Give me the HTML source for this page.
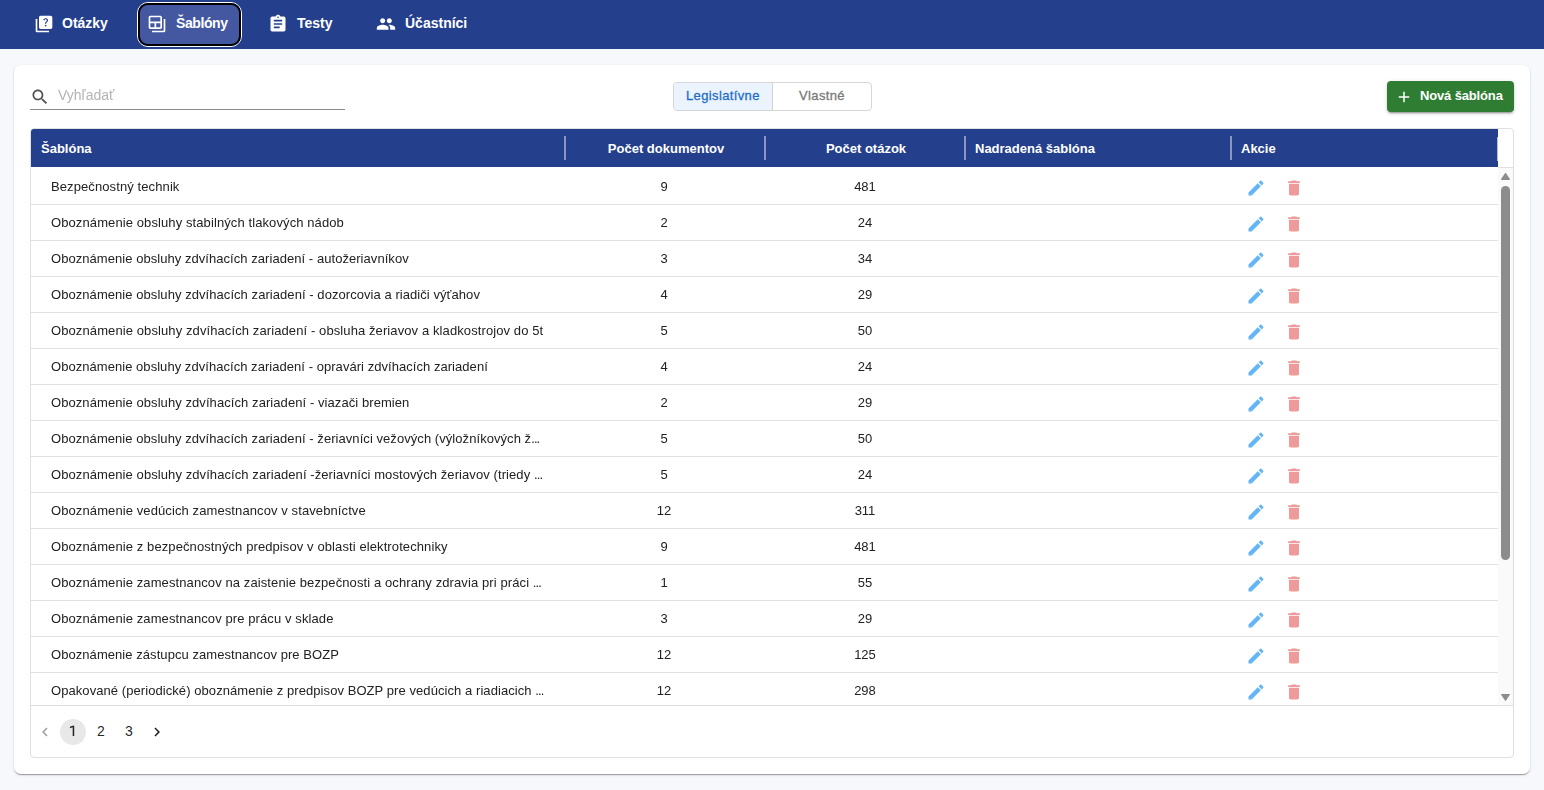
<!DOCTYPE html>
<html lang="sk">
<head>
<meta charset="utf-8">
<style>
*{box-sizing:border-box;margin:0;padding:0}
.row .n,.row .c2,.row .c3,.search-ph{will-change:transform}
html,body{width:1544px;height:790px;overflow:hidden}
body{background:#f7f8fc;font-family:"Liberation Sans",sans-serif;position:relative;color:rgba(0,0,0,0.87)}
.nav{position:absolute;left:0;top:0;width:1544px;height:49px;background:#243f8c}
.nav .ic{position:absolute;top:14px;width:20px;height:20px;fill:#fff}
.nav .tx{position:absolute;top:14px;font-size:14px;font-weight:700;color:#fff;line-height:18px;white-space:nowrap}
.activebtn{position:absolute;left:137px;top:2px;width:105px;height:45px;border-radius:11px;border:1px solid #fff;}
.activebtn .in{position:absolute;left:0;top:0;right:0;bottom:0;border:2px solid #000;border-radius:10px;background:#4358a0}
.card{position:absolute;left:14px;top:65px;width:1516px;height:709px;background:#fff;border-radius:7px;box-shadow:0px 2px 1px -1px rgba(0,0,0,0.2),0px 1px 1px 0px rgba(0,0,0,0.14),0px 1px 3px 0px rgba(0,0,0,0.12)}
.search-ic{position:absolute;left:30px;top:87px;width:20px;height:20px;fill:#505050}
.search-ph{position:absolute;left:58px;top:87px;font-size:14px;line-height:16px;color:#b4b4b4}
.search-line{position:absolute;left:30px;top:109px;width:315px;height:1px;background:#8a8a8a}
.tg{position:absolute;left:673px;top:82px;width:199px;height:29px;border:1px solid #d6d6d6;border-radius:4px;overflow:hidden}
.tg .a{position:absolute;left:0;top:0;width:99px;height:27px;background:#ebf3fc;border-right:1px solid #cfd4da}
.tg .t1{position:absolute;left:12px;top:5px;font-size:13px;letter-spacing:0.37px;color:#1f6fc5;line-height:15px;-webkit-text-stroke:0.3px #1f6fc5}
.tg .t2{position:absolute;left:125px;top:5px;font-size:13px;letter-spacing:0.37px;color:#7a7a7a;line-height:15px;-webkit-text-stroke:0.3px #7a7a7a}
.newbtn{position:absolute;left:1387px;top:81px;width:127px;height:31px;background:#2e7d32;border-radius:4px;box-shadow:0px 3px 1px -2px rgba(0,0,0,0.2),0px 2px 2px 0px rgba(0,0,0,0.14),0px 1px 5px 0px rgba(0,0,0,0.12)}
.newbtn svg{position:absolute;left:8px;top:7px;width:18px;height:18px;fill:#fff}
.newbtn span{position:absolute;left:33px;top:7px;letter-spacing:-0.15px;font-size:13px;font-weight:700;color:#fff;line-height:15px;white-space:nowrap}
.tbl{position:absolute;left:30px;top:128px;width:1484px;height:630px;border:1px solid #e0e0e0;border-radius:4px;overflow:hidden}
.thead{position:absolute;left:0;top:0;width:1467px;height:38px;background:#243f8c}
.th{position:absolute;top:12px;font-size:13px;font-weight:700;color:#fff;line-height:15px;white-space:nowrap}
.sep{position:absolute;top:7px;width:2px;height:24px;background:#8b95c1}
.rows{position:absolute;left:0;top:39px;width:1467px;height:537px;overflow:hidden}
.bodyline{position:absolute;left:0;top:576px;width:1483px;height:1px;background:#e0e0e0}
.spacer-line{position:absolute;left:1467px;top:38px;width:16px;height:1px;background:#e0e0e0}
.row{position:absolute;left:0;width:1467px;height:37px;border-bottom:1px solid #e0e0e0}
.row .n{position:absolute;left:20px;top:11px;font-size:13px;line-height:15px;white-space:nowrap;color:#222;letter-spacing:0.1px}
.ell{letter-spacing:-0.9px}
.row .c2,.row .c3{position:absolute;top:11px;font-size:13px;line-height:15px;width:200px;text-align:center;color:#222}
.row .c2{left:533px}
.row .c3{left:734px}
.row .ed{position:absolute;left:1215px;top:9.5px;width:20px;height:20px;fill:#64b5f6}
.row .dl{position:absolute;left:1253px;top:9.5px;width:20px;height:20px;fill:#ef9a9a}
.sb{position:absolute;left:1467px;top:39px;width:15px;height:537px;background:#fafafa}
.sb .up{position:absolute;left:3px;top:5px;width:0;height:0;border-left:4.5px solid transparent;border-right:4.5px solid transparent;border-bottom:7px solid #8c8c8c}
.sb .dn{position:absolute;left:3px;top:526px;width:0;height:0;border-left:4.5px solid transparent;border-right:4.5px solid transparent;border-top:7px solid #8c8c8c}
.sb .th{position:absolute;left:3px;top:18px;width:9px;height:374px;border-radius:4.5px;background:#8c8c8c}
.pgc{position:absolute;left:60px;top:719px;width:26px;height:26px;border-radius:13px;background:#e8e8e8}
.pgn{position:absolute;top:723px;width:28px;text-align:center;font-size:14px;line-height:16px;color:rgba(0,0,0,0.87)}
.pgi{position:absolute;top:723px;width:18px;height:18px}
</style>
</head>
<body>
<div class="nav">
  <svg class="ic" style="left:34px" viewBox="0 0 24 24"><path d="M4 6H2v14c0 1.1.9 2 2 2h14v-2H4zm16-4H8c-1.1 0-2 .9-2 2v12c0 1.1.9 2 2 2h12c1.1 0 2-.9 2-2V4c0-1.1-.9-2-2-2m-5.99 13c-.59 0-1.05-.47-1.05-1.05 0-.59.47-1.04 1.05-1.04.59 0 1.04.45 1.040 1.04-.01.58-.45 1.05-1.04 1.05m2.5-6.17c-.63.930-1.23 1.21-1.56 1.81-.13.24-.18.4-.18 1.18h-1.52c0-.41-.06-1.08.26-1.65.41-.73 1.18-1.16 1.63-1.8.48-.68.21-1.94-1.14-1.94-.88 0-1.32.67-1.5 1.23l-1.37-.57C11.51 5.96 12.52 5 13.99 5c1.23 0 2.08.56 2.51 1.26.37.61.58 1.73.01 2.57"/></svg>
  <div class="tx" style="left:62px">Otázky</div>
  <div class="activebtn"><div class="in"></div></div>
  <svg class="ic" style="left:147px" viewBox="0 0 24 24"><path d="M20 6v14H6v2h14c1.1 0 2-.9 2-2V6z"/><path d="M16 2H4c-1.1 0-2 .9-2 2v12c0 1.1.9 2 2 2h12c1.1 0 2-.9 2-2V4c0-1.1-.9-2-2-2M9 16H4v-5h5zm7 0h-5v-5h5zm0-7H4V4h12z"/></svg>
  <div class="tx" style="left:176px;letter-spacing:-0.4px">Šablóny</div>
  <svg class="ic" style="left:268px" viewBox="0 0 24 24"><path d="M19 3h-4.18C14.4 1.84 13.3 1 12 1s-2.4.84-2.82 2H5c-1.1 0-2 .9-2 2v14c0 1.1.9 2 2 2h14c1.1 0 2-.9 2-2V5c0-1.1-.9-2-2-2m-7 0c.55 0 1 .45 1 1s-.45 1-1 1-1-.45-1-1 .45-1 1-1m2 14H7v-2h7zm3-4H7v-2h10zm0-4H7V7h10z"/></svg>
  <div class="tx" style="left:297px">Testy</div>
  <svg class="ic" style="left:376px" viewBox="0 0 24 24"><path d="M16 11c1.66 0 2.99-1.34 2.99-3S17.66 5 16 5c-1.66 0-3 1.34-3 3s1.34 3 3 3m-8 0c1.66 0 2.99-1.34 2.99-3S9.66 5 8 5C6.34 5 5 6.34 5 8s1.340 3 3 3m0 2c-2.33 0-7 1.17-7 3.5V19h14v-2.5c0-2.33-4.67-3.5-7-3.5m8 0c-.29 0-.62.02-.97.05 1.16.84 1.97 1.97 1.97 3.45V19h6v-2.5c0-2.33-4.67-3.5-7-3.5"/></svg>
  <div class="tx" style="left:405px">Účastníci</div>
</div>

<div class="card"></div>
<svg class="search-ic" viewBox="0 0 24 24"><path d="M15.5 14h-.79l-.28-.27C15.41 12.59 16 11.11 16 9.5 16 5.910 13.09 3 9.5 3S3 5.91 3 9.5 5.91 16 9.5 16c1.61 0 3.09-.59 4.23-1.57l.27.28v.79l5 4.99L20.49 19zm-6 0C7.01 14 5 11.99 5 9.5S7.01 5 9.5 5 14 7.01 14 9.5 11.99 14 9.5 14"/></svg>
<div class="search-ph">Vyhľadať</div>
<div class="search-line"></div>

<div class="tg"><div class="a"></div><div class="t1">Legislatívne</div><div class="t2">Vlastné</div></div>

<div class="newbtn"><svg viewBox="0 0 24 24"><path d="M19 13h-6v6h-2v-6H5v-2h6V5h2v6h6z"/></svg><span>Nová šablóna</span></div>

<div class="tbl">
  <div class="thead">
    <div class="th" style="left:10px">Šablóna</div>
    <div class="sep" style="left:533px"></div>
    <div class="th" style="left:535px;width:200px;text-align:center">Počet dokumentov</div>
    <div class="sep" style="left:733px"></div>
    <div class="th" style="left:735px;width:200px;text-align:center">Počet otázok</div>
    <div class="sep" style="left:933px"></div>
    <div class="th" style="left:944px">Nadradená šablóna</div>
    <div class="sep" style="left:1199px"></div>
    <div class="th" style="left:1210px">Akcie</div>
    <div class="sep" style="left:1466px;width:1px;top:8px;height:24px;background:#b5bcd8"></div>
  </div>
  <div class="rows" id="rows">
<div class="row" style="top:0px"><div class="n">Bezpečnostný technik</div><div class="c2">9</div><div class="c3">481</div><svg class="ed" viewBox="0 0 24 24"><path d="M3 17.25V21h3.75L17.81 9.94l-3.75-3.75zM20.71 7.04c.39-.39.39-1.02 0-1.41l-2.34-2.34a.996.996 0 0 0-1.41 0l-1.83 1.83 3.75 3.75z"/></svg><svg class="dl" viewBox="0 0 24 24"><path d="M6 19c0 1.1.9 2 2 2h8c1.1 0 2-.9 2-2V7H6zM19 4h-3.5l-1-1h-5l-1 1H5v2h14z"/></svg></div>
<div class="row" style="top:36px"><div class="n">Oboznámenie obsluhy stabilných tlakových nádob</div><div class="c2">2</div><div class="c3">24</div><svg class="ed" viewBox="0 0 24 24"><path d="M3 17.25V21h3.75L17.81 9.94l-3.75-3.75zM20.71 7.04c.39-.39.39-1.02 0-1.41l-2.34-2.34a.996.996 0 0 0-1.41 0l-1.83 1.83 3.75 3.75z"/></svg><svg class="dl" viewBox="0 0 24 24"><path d="M6 19c0 1.1.9 2 2 2h8c1.1 0 2-.9 2-2V7H6zM19 4h-3.5l-1-1h-5l-1 1H5v2h14z"/></svg></div>
<div class="row" style="top:72px"><div class="n" style="letter-spacing:0.05px">Oboznámenie obsluhy zdvíhacích zariadení - autožeriavníkov</div><div class="c2">3</div><div class="c3">34</div><svg class="ed" viewBox="0 0 24 24"><path d="M3 17.25V21h3.75L17.81 9.94l-3.75-3.75zM20.71 7.04c.39-.39.39-1.02 0-1.41l-2.34-2.34a.996.996 0 0 0-1.41 0l-1.83 1.83 3.75 3.75z"/></svg><svg class="dl" viewBox="0 0 24 24"><path d="M6 19c0 1.1.9 2 2 2h8c1.1 0 2-.9 2-2V7H6zM19 4h-3.5l-1-1h-5l-1 1H5v2h14z"/></svg></div>
<div class="row" style="top:108px"><div class="n" style="letter-spacing:0.06px">Oboznámenie obsluhy zdvíhacích zariadení - dozorcovia a riadiči výťahov</div><div class="c2">4</div><div class="c3">29</div><svg class="ed" viewBox="0 0 24 24"><path d="M3 17.25V21h3.75L17.81 9.94l-3.75-3.75zM20.71 7.04c.39-.39.39-1.02 0-1.41l-2.34-2.34a.996.996 0 0 0-1.41 0l-1.83 1.83 3.75 3.75z"/></svg><svg class="dl" viewBox="0 0 24 24"><path d="M6 19c0 1.1.9 2 2 2h8c1.1 0 2-.9 2-2V7H6zM19 4h-3.5l-1-1h-5l-1 1H5v2h14z"/></svg></div>
<div class="row" style="top:144px"><div class="n">Oboznámenie obsluhy zdvíhacích zariadení - obsluha žeriavov a kladkostrojov do 5t</div><div class="c2">5</div><div class="c3">50</div><svg class="ed" viewBox="0 0 24 24"><path d="M3 17.25V21h3.75L17.81 9.94l-3.75-3.75zM20.71 7.04c.39-.39.39-1.02 0-1.41l-2.34-2.34a.996.996 0 0 0-1.41 0l-1.83 1.83 3.75 3.75z"/></svg><svg class="dl" viewBox="0 0 24 24"><path d="M6 19c0 1.1.9 2 2 2h8c1.1 0 2-.9 2-2V7H6zM19 4h-3.5l-1-1h-5l-1 1H5v2h14z"/></svg></div>
<div class="row" style="top:180px"><div class="n" style="letter-spacing:0.045px">Oboznámenie obsluhy zdvíhacích zariadení - opravári zdvíhacích zariadení</div><div class="c2">4</div><div class="c3">24</div><svg class="ed" viewBox="0 0 24 24"><path d="M3 17.25V21h3.75L17.81 9.94l-3.75-3.75zM20.71 7.04c.39-.39.39-1.02 0-1.41l-2.34-2.34a.996.996 0 0 0-1.41 0l-1.83 1.83 3.75 3.75z"/></svg><svg class="dl" viewBox="0 0 24 24"><path d="M6 19c0 1.1.9 2 2 2h8c1.1 0 2-.9 2-2V7H6zM19 4h-3.5l-1-1h-5l-1 1H5v2h14z"/></svg></div>
<div class="row" style="top:216px"><div class="n" style="letter-spacing:0.075px">Oboznámenie obsluhy zdvíhacích zariadení - viazači bremien</div><div class="c2">2</div><div class="c3">29</div><svg class="ed" viewBox="0 0 24 24"><path d="M3 17.25V21h3.75L17.81 9.94l-3.75-3.75zM20.71 7.04c.39-.39.39-1.02 0-1.41l-2.34-2.34a.996.996 0 0 0-1.41 0l-1.83 1.83 3.75 3.75z"/></svg><svg class="dl" viewBox="0 0 24 24"><path d="M6 19c0 1.1.9 2 2 2h8c1.1 0 2-.9 2-2V7H6zM19 4h-3.5l-1-1h-5l-1 1H5v2h14z"/></svg></div>
<div class="row" style="top:252px"><div class="n" style="letter-spacing:0.06px">Oboznámenie obsluhy zdvíhacích zariadení - žeriavníci vežových (výložníkových ž<span class="ell">...</span></div><div class="c2">5</div><div class="c3">50</div><svg class="ed" viewBox="0 0 24 24"><path d="M3 17.25V21h3.75L17.81 9.94l-3.75-3.75zM20.71 7.04c.39-.39.39-1.02 0-1.41l-2.34-2.34a.996.996 0 0 0-1.41 0l-1.83 1.83 3.75 3.75z"/></svg><svg class="dl" viewBox="0 0 24 24"><path d="M6 19c0 1.1.9 2 2 2h8c1.1 0 2-.9 2-2V7H6zM19 4h-3.5l-1-1h-5l-1 1H5v2h14z"/></svg></div>
<div class="row" style="top:288px"><div class="n" style="letter-spacing:0.085px">Oboznámenie obsluhy zdvíhacích zariadení -žeriavníci mostových žeriavov (triedy <span class="ell">...</span></div><div class="c2">5</div><div class="c3">24</div><svg class="ed" viewBox="0 0 24 24"><path d="M3 17.25V21h3.75L17.81 9.94l-3.75-3.75zM20.71 7.04c.39-.39.39-1.02 0-1.41l-2.34-2.34a.996.996 0 0 0-1.41 0l-1.83 1.83 3.75 3.75z"/></svg><svg class="dl" viewBox="0 0 24 24"><path d="M6 19c0 1.1.9 2 2 2h8c1.1 0 2-.9 2-2V7H6zM19 4h-3.5l-1-1h-5l-1 1H5v2h14z"/></svg></div>
<div class="row" style="top:324px"><div class="n">Oboznámenie vedúcich zamestnancov v stavebníctve</div><div class="c2">12</div><div class="c3">311</div><svg class="ed" viewBox="0 0 24 24"><path d="M3 17.25V21h3.75L17.81 9.94l-3.75-3.75zM20.71 7.04c.39-.39.39-1.02 0-1.41l-2.34-2.34a.996.996 0 0 0-1.41 0l-1.83 1.83 3.75 3.75z"/></svg><svg class="dl" viewBox="0 0 24 24"><path d="M6 19c0 1.1.9 2 2 2h8c1.1 0 2-.9 2-2V7H6zM19 4h-3.5l-1-1h-5l-1 1H5v2h14z"/></svg></div>
<div class="row" style="top:360px"><div class="n">Oboznámenie z bezpečnostných predpisov v oblasti elektrotechniky</div><div class="c2">9</div><div class="c3">481</div><svg class="ed" viewBox="0 0 24 24"><path d="M3 17.25V21h3.75L17.81 9.94l-3.75-3.75zM20.71 7.04c.39-.39.39-1.02 0-1.41l-2.34-2.34a.996.996 0 0 0-1.41 0l-1.83 1.83 3.75 3.75z"/></svg><svg class="dl" viewBox="0 0 24 24"><path d="M6 19c0 1.1.9 2 2 2h8c1.1 0 2-.9 2-2V7H6zM19 4h-3.5l-1-1h-5l-1 1H5v2h14z"/></svg></div>
<div class="row" style="top:396px"><div class="n" style="letter-spacing:0.1px">Oboznámenie zamestnancov na zaistenie bezpečnosti a ochrany zdravia pri práci <span class="ell">...</span></div><div class="c2">1</div><div class="c3">55</div><svg class="ed" viewBox="0 0 24 24"><path d="M3 17.25V21h3.75L17.81 9.94l-3.75-3.75zM20.71 7.04c.39-.39.39-1.02 0-1.41l-2.34-2.34a.996.996 0 0 0-1.41 0l-1.83 1.83 3.75 3.75z"/></svg><svg class="dl" viewBox="0 0 24 24"><path d="M6 19c0 1.1.9 2 2 2h8c1.1 0 2-.9 2-2V7H6zM19 4h-3.5l-1-1h-5l-1 1H5v2h14z"/></svg></div>
<div class="row" style="top:432px"><div class="n">Oboznámenie zamestnancov pre prácu v sklade</div><div class="c2">3</div><div class="c3">29</div><svg class="ed" viewBox="0 0 24 24"><path d="M3 17.25V21h3.75L17.81 9.94l-3.75-3.75zM20.71 7.04c.39-.39.39-1.02 0-1.41l-2.34-2.34a.996.996 0 0 0-1.41 0l-1.83 1.83 3.75 3.75z"/></svg><svg class="dl" viewBox="0 0 24 24"><path d="M6 19c0 1.1.9 2 2 2h8c1.1 0 2-.9 2-2V7H6zM19 4h-3.5l-1-1h-5l-1 1H5v2h14z"/></svg></div>
<div class="row" style="top:468px"><div class="n" style="letter-spacing:0.06px">Oboznámenie zástupcu zamestnancov pre BOZP</div><div class="c2">12</div><div class="c3">125</div><svg class="ed" viewBox="0 0 24 24"><path d="M3 17.25V21h3.75L17.81 9.94l-3.75-3.75zM20.71 7.04c.39-.39.39-1.02 0-1.41l-2.34-2.34a.996.996 0 0 0-1.41 0l-1.83 1.83 3.75 3.75z"/></svg><svg class="dl" viewBox="0 0 24 24"><path d="M6 19c0 1.1.9 2 2 2h8c1.1 0 2-.9 2-2V7H6zM19 4h-3.5l-1-1h-5l-1 1H5v2h14z"/></svg></div>
<div class="row" style="top:504px"><div class="n" style="letter-spacing:0.07px">Opakované (periodické) oboznámenie z predpisov BOZP pre vedúcich a riadiacich <span class="ell">...</span></div><div class="c2">12</div><div class="c3">298</div><svg class="ed" viewBox="0 0 24 24"><path d="M3 17.25V21h3.75L17.81 9.94l-3.75-3.75zM20.71 7.04c.39-.39.39-1.02 0-1.41l-2.34-2.34a.996.996 0 0 0-1.41 0l-1.83 1.83 3.75 3.75z"/></svg><svg class="dl" viewBox="0 0 24 24"><path d="M6 19c0 1.1.9 2 2 2h8c1.1 0 2-.9 2-2V7H6zM19 4h-3.5l-1-1h-5l-1 1H5v2h14z"/></svg></div>
</div>
  <div class="sb"><svg style="position:absolute;left:0;top:0" width="15" height="15"><path d="M3.6 11.3 L7.5 5.6 L11.4 11.3 Z" fill="#8c8c8c" stroke="#8c8c8c" stroke-width="1.2" stroke-linejoin="round"/></svg><div class="th"></div><svg style="position:absolute;left:0;top:522px" width="15" height="15"><path d="M3.6 4.5 L7.5 10.2 L11.4 4.5 Z" fill="#8c8c8c" stroke="#8c8c8c" stroke-width="1.2" stroke-linejoin="round"/></svg></div>
  <div class="spacer-line"></div>
  <div class="bodyline"></div>
</div>
<div class="pager">
<svg class="pgi" style="left:36px;fill:#9e9e9e" viewBox="0 0 24 24"><path d="M15.41 7.41 14 6l-6 6 6 6 1.41-1.41L10.83 12z"/></svg>
<div class="pgc"></div>
<svg style="position:absolute;left:69px;top:725px" width="7" height="12"><path d="M3.7 0.7H5.2V11H3.7V2.3L0.9 3.2V1.8Z" fill="#222"/></svg>
<div class="pgn" style="left:87px">2</div>
<div class="pgn" style="left:115px">3</div>
<svg class="pgi" style="left:148px;fill:#212121" viewBox="0 0 24 24"><path d="M10 6 8.59 7.41 13.17 12l-4.58 4.59L10 18l6-6z"/></svg>
</div>
</body>
</html>
